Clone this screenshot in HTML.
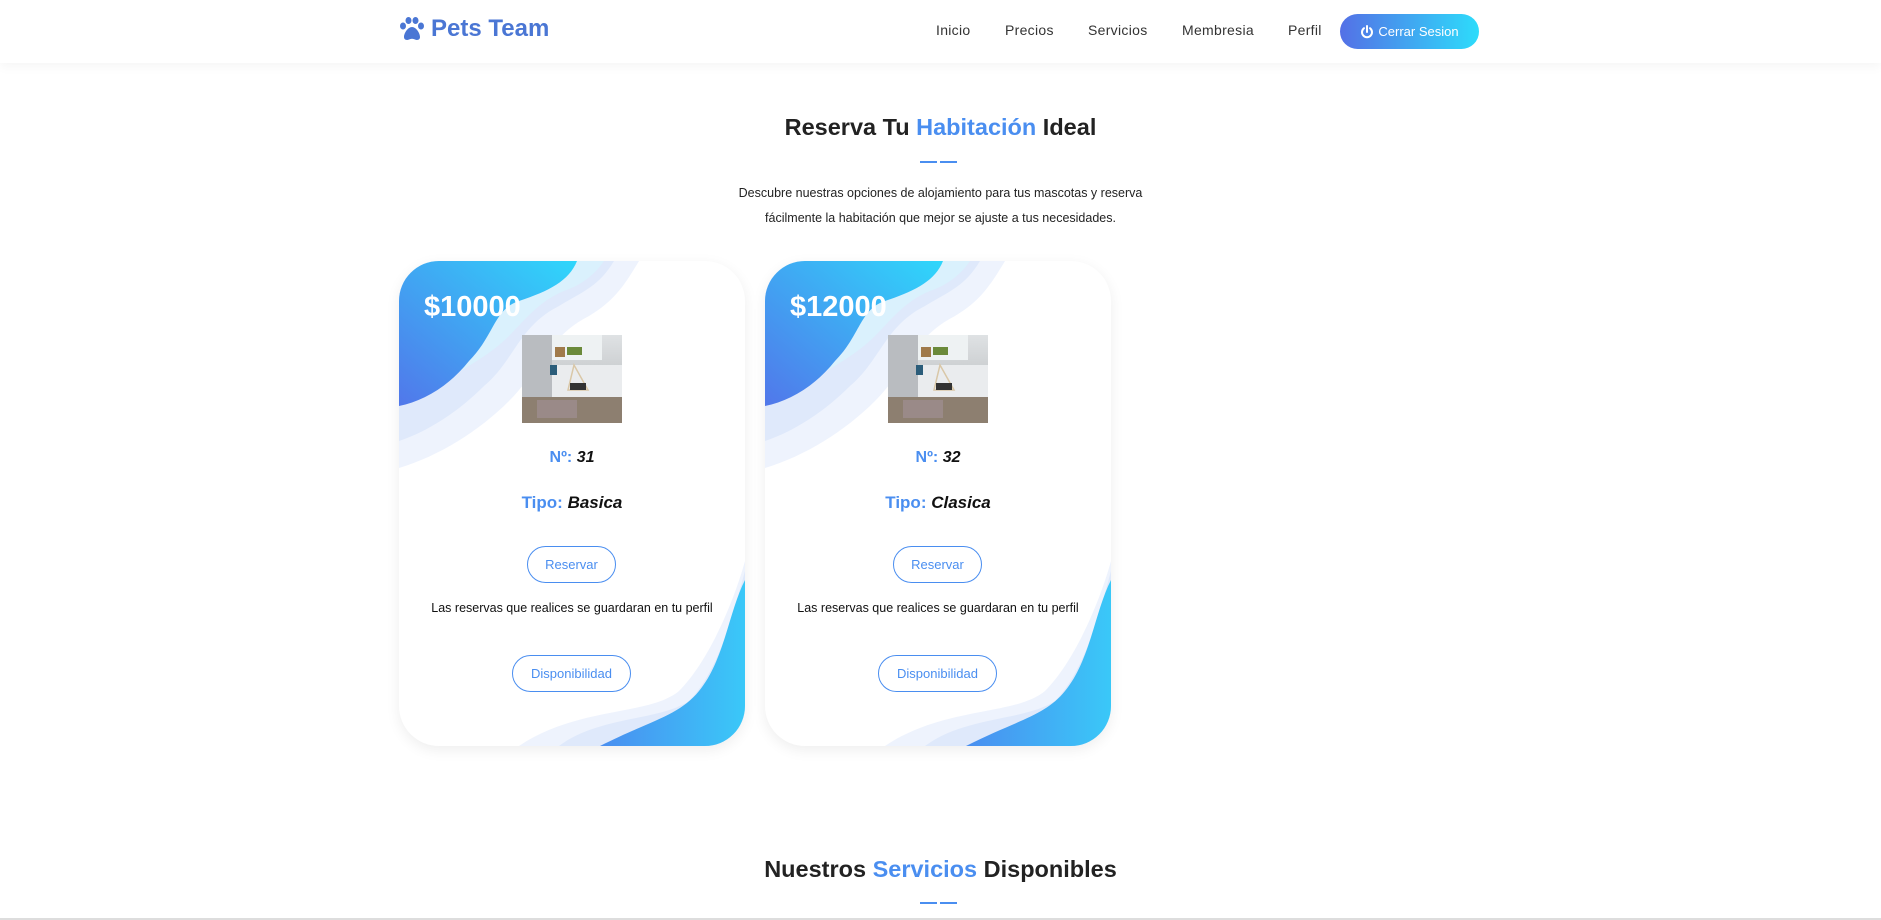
<!DOCTYPE html>
<html><head><meta charset="utf-8">
<style>
*{margin:0;padding:0;box-sizing:border-box}
html,body{width:1881px;height:920px;overflow:hidden;background:#fff;font-family:"Liberation Sans",sans-serif}
.nav{position:absolute;left:0;top:0;width:1881px;height:63px;background:#fff;box-shadow:0 4px 10px rgba(0,0,0,0.04)}
.logo{position:absolute;left:399px;top:15px;color:#4a76d4;font-weight:bold;font-size:24px;display:flex;align-items:center}
.logo svg{margin-right:6px}
.menu a{position:absolute;top:22px;font-size:14px;color:#333;text-decoration:none;letter-spacing:0.3px}
.btn{position:absolute;left:1340px;top:14px;width:139px;height:35px;border-radius:18px;background:linear-gradient(90deg,#5470e6,#2ddcfb);color:#fff;font-size:13px;display:flex;align-items:center;justify-content:center;gap:4px}
h2{position:absolute;left:0;width:1881px;text-align:center;font-size:23.5px;font-weight:bold;color:#222}
h2 span{color:#4a8ef0}
.ul{position:absolute;height:2px;width:17px;background:#4a8ef0}
.desc{position:absolute;left:0;width:1881px;text-align:center;font-size:12.5px;color:#222;line-height:25px;top:181px}
.card{position:absolute;top:261px;width:346px;height:485px;border-radius:40px;background:#fff;box-shadow:0 4px 14px rgba(0,0,0,0.07);overflow:hidden}
.card svg.bg{position:absolute;left:0;top:0}
.price{position:absolute;left:25px;top:30px;color:#fff;font-weight:bold;font-size:29px}
.img{position:absolute;left:123px;top:74px;width:100px;height:88px;background:linear-gradient(180deg,#dfe2e4 0%,#c9ccce 45%,#9a8f84 70%,#8e8275 100%);overflow:hidden}
.t{position:absolute;left:0;width:346px;text-align:center;font-weight:bold;color:#4a8ef0}
.t i{color:#111}
.ob{position:absolute;border:1.5px solid #4a8ef0;border-radius:20px;color:#4a8ef0;font-size:13px;display:flex;align-items:center;justify-content:center;background:#fff}
.note{position:absolute;left:0;width:346px;text-align:center;font-size:12.5px;color:#111;top:340px}
.bot{position:absolute;left:0;top:918px;width:1881px;height:2px;background:#ddd}
</style></head><body>
<div class="nav">
 <div class="logo"><svg width="26" height="24" viewBox="0 0 26 24"><ellipse cx="4" cy="9" rx="3" ry="3.5" fill="#4a76d4"/><ellipse cx="9.5" cy="3.5" rx="3" ry="3.5" fill="#4a76d4"/><ellipse cx="16.5" cy="3.5" rx="3" ry="3.5" fill="#4a76d4"/><ellipse cx="22" cy="9" rx="3" ry="3.5" fill="#4a76d4"/><path d="M13 10C9 10 5 16 5 20c0 3 3 3.5 5 2.5 2-1 4-1 6 0 2 1 5 .5 5-2.5 0-4-4-10-8-10z" fill="#4a76d4"/></svg>Pets Team</div>
 <div class="menu">
  <a style="left:936px">Inicio</a><a style="left:1005px">Precios</a><a style="left:1088px">Servicios</a><a style="left:1182px">Membresia</a><a style="left:1288px">Perfil</a>
 </div>
 <div class="btn"><svg width="14" height="14" viewBox="0 0 14 14"><path d="M4 3.2A5 5 0 1 0 10 3.2" fill="none" stroke="#fff" stroke-width="2" stroke-linecap="round"/><line x1="7" y1="1" x2="7" y2="7" stroke="#fff" stroke-width="2" stroke-linecap="round"/></svg>Cerrar Sesion</div>
</div>

<h2 style="top:114px">Reserva Tu <span>Habitación</span> Ideal</h2>
<div class="ul" style="left:920px;top:161px"></div><div class="ul" style="left:940px;top:161px"></div>
<div class="desc">Descubre nuestras opciones de alojamiento para tus mascotas y reserva<br>fácilmente la habitación que mejor se ajuste a tus necesidades.</div>

<div class="card" style="left:399px">
 <svg class="bg" width="346" height="485" viewBox="0 0 346 485">
  <defs><linearGradient id="g1" x1="0" y1="1" x2="1" y2="0"><stop offset="0" stop-color="#5177ea"/><stop offset="1" stop-color="#2fd7fb"/></linearGradient>
  <linearGradient id="g2" x1="0" y1="0" x2="1" y2="0"><stop offset="0" stop-color="#4a8ef0"/><stop offset="1" stop-color="#3ac8f8"/></linearGradient></defs>
  <path d="M0 0H240C225 25 215 40 190 55C150 75 140 110 110 140C80 170 40 195 0 207Z" fill="#eef3fd"/>
  <path d="M0 0H215C200 25 185 30 160 45C120 65 115 100 85 125C60 150 30 170 0 180Z" fill="#dfe9fb"/>
  <path d="M0 0H205C195 15 180 25 165 30C140 40 125 60 110 75C85 100 50 115 0 145Z" fill="#d7f3fd" opacity=".7"/>
  <path d="M0 0H178C170 20 150 30 120 40C95 48 95 75 70 100C50 125 25 140 0 145Z" fill="url(#g1)"/>
  <path d="M346 300C335 340 310 400 280 430C250 455 180 445 120 485H346Z" fill="#eef3fd"/>
  <path d="M346 310C335 350 320 410 290 440C260 460 200 455 160 485H346Z" fill="#dfe9fb"/>
  <path d="M346 319C330 350 325 400 300 430C280 455 250 460 201 485H346Z" fill="url(#g2)"/>
 </svg>
 <div class="price">$10000</div>
 <div class="img"><svg width="100" height="88" viewBox="0 0 100 88"><rect x="0" y="0" width="30" height="88" fill="#b9bcc0"/><rect x="30" y="0" width="50" height="25" fill="#eef2f3"/><rect x="33" y="12" width="10" height="10" fill="#a07a4a"/><rect x="45" y="12" width="15" height="8" fill="#6b8a3a"/><rect x="30" y="30" width="70" height="35" fill="#eaecee"/><rect x="28" y="30" width="7" height="10" fill="#2b5d7a"/><path d="M46 55L52 30L66 55Z" fill="none" stroke="#d9c7a7" stroke-width="1.5"/><rect x="48" y="48" width="16" height="7" fill="#333"/><rect x="0" y="62" width="100" height="26" fill="#8d7f70"/><rect x="15" y="65" width="40" height="18" fill="#9a8a88"/></svg></div>
 <div class="t" style="top:188px;font-size:16px">Nº: <i>31</i></div>
 <div class="t" style="top:232px;font-size:17px">Tipo: <i>Basica</i></div>
 <div class="ob" style="left:128px;top:285px;width:89px;height:37px">Reservar</div>
 <div class="note">Las reservas que realices se guardaran en tu perfil</div>
 <div class="ob" style="left:113px;top:394px;width:119px;height:37px">Disponibilidad</div>
</div>

<div class="card" style="left:765px">
 <svg class="bg" width="346" height="485" viewBox="0 0 346 485">
  <path d="M0 0H240C225 25 215 40 190 55C150 75 140 110 110 140C80 170 40 195 0 207Z" fill="#eef3fd"/>
  <path d="M0 0H215C200 25 185 30 160 45C120 65 115 100 85 125C60 150 30 170 0 180Z" fill="#dfe9fb"/>
  <path d="M0 0H205C195 15 180 25 165 30C140 40 125 60 110 75C85 100 50 115 0 145Z" fill="#d7f3fd" opacity=".7"/>
  <path d="M0 0H178C170 20 150 30 120 40C95 48 95 75 70 100C50 125 25 140 0 145Z" fill="url(#g1)"/>
  <path d="M346 300C335 340 310 400 280 430C250 455 180 445 120 485H346Z" fill="#eef3fd"/>
  <path d="M346 310C335 350 320 410 290 440C260 460 200 455 160 485H346Z" fill="#dfe9fb"/>
  <path d="M346 319C330 350 325 400 300 430C280 455 250 460 201 485H346Z" fill="url(#g2)"/>
 </svg>
 <div class="price">$12000</div>
 <div class="img"><svg width="100" height="88" viewBox="0 0 100 88"><rect x="0" y="0" width="30" height="88" fill="#b9bcc0"/><rect x="30" y="0" width="50" height="25" fill="#eef2f3"/><rect x="33" y="12" width="10" height="10" fill="#a07a4a"/><rect x="45" y="12" width="15" height="8" fill="#6b8a3a"/><rect x="30" y="30" width="70" height="35" fill="#eaecee"/><rect x="28" y="30" width="7" height="10" fill="#2b5d7a"/><path d="M46 55L52 30L66 55Z" fill="none" stroke="#d9c7a7" stroke-width="1.5"/><rect x="48" y="48" width="16" height="7" fill="#333"/><rect x="0" y="62" width="100" height="26" fill="#8d7f70"/><rect x="15" y="65" width="40" height="18" fill="#9a8a88"/></svg></div>
 <div class="t" style="top:188px;font-size:16px">Nº: <i>32</i></div>
 <div class="t" style="top:232px;font-size:17px">Tipo: <i>Clasica</i></div>
 <div class="ob" style="left:128px;top:285px;width:89px;height:37px">Reservar</div>
 <div class="note">Las reservas que realices se guardaran en tu perfil</div>
 <div class="ob" style="left:113px;top:394px;width:119px;height:37px">Disponibilidad</div>
</div>

<h2 style="top:856px">Nuestros <span>Servicios</span> Disponibles</h2>
<div class="ul" style="left:920px;top:902px"></div><div class="ul" style="left:940px;top:902px"></div>
<div class="bot"></div>
</body></html>
